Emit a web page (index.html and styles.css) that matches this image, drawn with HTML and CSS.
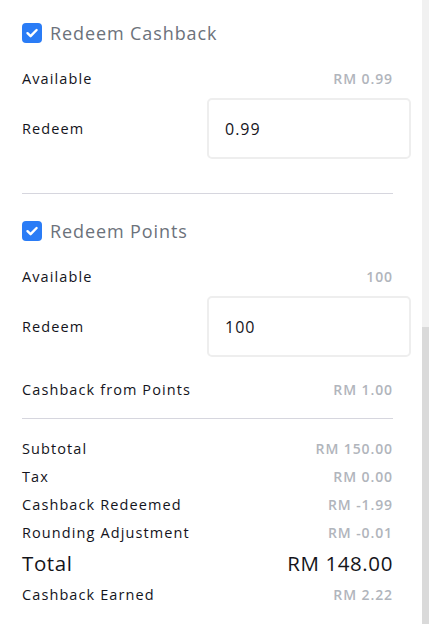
FILE: index.html
```html
<!DOCTYPE html>
<html lang="en">
<head>
    <meta charset="UTF-8">
    <meta name="viewport" content="width=device-width, initial-scale=1.0">
    <title>Redeem</title>
    <link rel="stylesheet" href="styles.css">
</head>
<body>
    <div class="panel">
        <div class="section">
            <label class="check-row">
                <span class="check-box">
                    <svg viewBox="0 0 20 20" width="20" height="20"><path d="M5.5 10.2 L8.6 13.2 L14.6 7" fill="none" stroke="#fff" stroke-width="2.4" stroke-linecap="round" stroke-linejoin="round"/></svg>
                </span>
                Redeem Cashback
            </label>
            <div class="row available">
                <span class="label">Available</span>
                <span class="value">RM 0.99</span>
            </div>
            <div class="row redeem">
                <span class="label">Redeem</span>
                <div class="input-box">0.99</div>
            </div>
        </div>

        <div class="divider"></div>

        <div class="section">
            <label class="check-row">
                <span class="check-box">
                    <svg viewBox="0 0 20 20" width="20" height="20"><path d="M5.5 10.2 L8.6 13.2 L14.6 7" fill="none" stroke="#fff" stroke-width="2.4" stroke-linecap="round" stroke-linejoin="round"/></svg>
                </span>
                Redeem Points
            </label>
            <div class="row available">
                <span class="label">Available</span>
                <span class="value">100</span>
            </div>
            <div class="row redeem">
                <span class="label">Redeem</span>
                <div class="input-box">100</div>
            </div>
            <div class="row from-points">
                <span class="label">Cashback from Points</span>
                <span class="value">RM 1.00</span>
            </div>
        </div>

        <div class="divider second"></div>

        <div class="summary">
            <div class="line"><span class="label">Subtotal</span><span class="value">RM 150.00</span></div>
            <div class="line"><span class="label">Tax</span><span class="value">RM 0.00</span></div>
            <div class="line"><span class="label">Cashback Redeemed</span><span class="value">RM -1.99</span></div>
            <div class="line"><span class="label">Rounding Adjustment</span><span class="value">RM -0.01</span></div>
            <div class="line total"><span class="label">Total</span><span class="value">RM 148.00</span></div>
            <div class="line"><span class="label">Cashback Earned</span><span class="value">RM 2.22</span></div>
        </div>
    </div>

    <div class="scrollbar"><div class="thumb"></div></div>
</body>
</html>
```

FILE: styles.css
```css
body {
    margin: 0;
    background: #fff;
    font-family: "Open Sans", "Noto Sans", sans-serif;
    color: #14141c;
    height: 624px;
    overflow: hidden;
}
.panel {
    width: 371px;
    padding: 23px 0 0 22px;
}
.check-row {
    display: flex;
    align-items: center;
    gap: 8px;
    height: 20px;
    font-size: 18px;
    font-weight: 500;
    letter-spacing: 0.9px;
    color: #6c727b;
}
.check-box {
    width: 20px;
    height: 20px;
    border-radius: 4px;
    background: #2a7cf6;
    display: flex;
}
.row {
    display: flex;
    justify-content: space-between;
    align-items: center;
}
.label {
    font-size: 14.5px;
    font-weight: 500;
    letter-spacing: 1.1px;
}
.value {
    font-size: 14px;
    font-weight: 600;
    letter-spacing: 0.9px;
    color: #b1b5bc;
}
.available {
    height: 20px;
    margin-top: 25px;
}
.redeem {
    margin-top: 10px;
    margin-right: -18px;
}
.input-box {
    box-sizing: border-box;
    width: 204px;
    height: 61px;
    border: 2px solid #eeeeee;
    border-radius: 5px;
    padding: 0 16px;
    display: flex;
    align-items: center;
    font-size: 16px;
    font-weight: 500;
    letter-spacing: 1px;
}
.from-points {
    height: 20px;
    margin-top: 22px;
}
.divider {
    height: 1px;
    background: #d6d6de;
    margin: 34px 0 27px;
}
.divider.second {
    margin: 19px 0 15px;
}
.line {
    display: flex;
    justify-content: space-between;
    align-items: center;
    height: 28px;
}
.line.total {
    height: 34px;
}
.line.total .label,
.line.total .value {
    font-size: 20.5px;
    font-weight: 500;
    letter-spacing: 0.6px;
    color: #14141a;
}
.scrollbar {
    position: absolute;
    top: 0;
    right: 0;
    width: 7px;
    height: 624px;
    background: #f1f1f1;
}
.thumb {
    margin-top: 327px;
    height: 297px;
    background: #dadada;
}
```
